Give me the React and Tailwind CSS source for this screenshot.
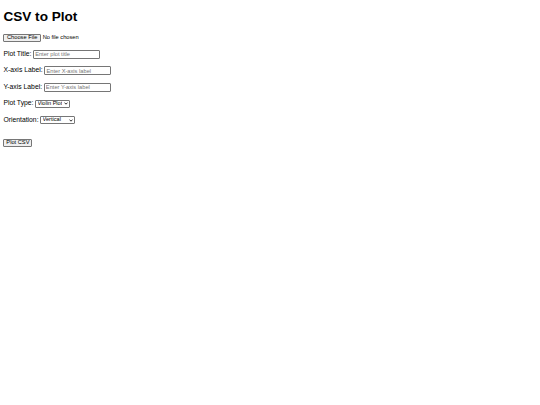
function Sel({ value, options }) {
  return (
    <div className="relative flex h-[8px] w-[35px]">
      <select
        defaultValue={value}
        className="block h-[8px] w-[35px] appearance-none border-[0.5px] border-[#767676] rounded-[1px] bg-white py-0 pl-[1.5px] pr-[7px] text-[5.6px] leading-none text-black outline-none"
      >
        {options.map((o) => (
          <option key={o} value={o}>
            {o}
          </option>
        ))}
      </select>
      <svg
        className="pointer-events-none absolute right-[2px] top-[2.6px]"
        width="4"
        height="3"
        viewBox="0 0 8 6"
      >
        <path d="M1 1.2 L4 4.4 L7 1.2" fill="none" stroke="#000" strokeWidth="1.6" />
      </svg>
    </div>
  );
}

export default function App() {
  const font = { fontFamily: '"Liberation Sans", Arial, sans-serif' };
  const labelCls = "text-[6.8px] leading-none text-black mr-[1.5px]";
  const inputCls =
    "h-[9px] w-[67px] border-[0.5px] border-[#767676] rounded-[1px] bg-white px-[1.3px] text-[5.7px] leading-none text-black placeholder:text-[#757575] outline-none";
  return (
    <div className="min-h-[405px] w-[540px] bg-white pl-[3.4px] pt-[9px] text-black" style={font}>
      <h1 className="text-[13.6px] font-bold leading-[16px]">CSV to Plot</h1>
      <div className="mt-[8.5px] flex h-[9px] items-center">
        <button className="h-[8.5px] border-[0.5px] border-[#767676] rounded-[1px] bg-[#efefef] px-[2.6px] text-[5.7px] leading-none text-black">
          Choose File
        </button>
        <span className="ml-[1.7px] text-[5.7px] leading-none">No file chosen</span>
      </div>
      <div className="mt-[7px] flex h-[9px] items-center">
        <span className={labelCls}>Plot Title:</span>
        <input type="text" placeholder="Enter plot title" className={inputCls} />
      </div>
      <div className="mt-[7.5px] flex h-[9px] items-center">
        <span className={labelCls}>X-axis Label:</span>
        <input type="text" placeholder="Enter X-axis label" className={inputCls} />
      </div>
      <div className="mt-[7.5px] flex h-[9px] items-center">
        <span className={labelCls}>Y-axis Label:</span>
        <input type="text" placeholder="Enter Y-axis label" className={inputCls} />
      </div>
      <div className="mt-[7.5px] flex h-[9px] items-center">
        <span className={labelCls}>Plot Type:</span>
        <Sel value="Violin Plot" options={["Violin Plot", "Box Plot"]} />
      </div>
      <div className="mt-[7.5px] flex h-[9px] items-center">
        <span className={labelCls}>Orientation:</span>
        <Sel value="Vertical" options={["Vertical", "Horizontal"]} />
      </div>
      <div className="mt-[14px] flex h-[9px] items-center">
        <button className="h-[8.5px] w-[29px] border-[0.5px] border-[#767676] rounded-[1px] bg-[#efefef] text-[5.7px] leading-none text-black">
          Plot CSV
        </button>
      </div>
    </div>
  );
}
